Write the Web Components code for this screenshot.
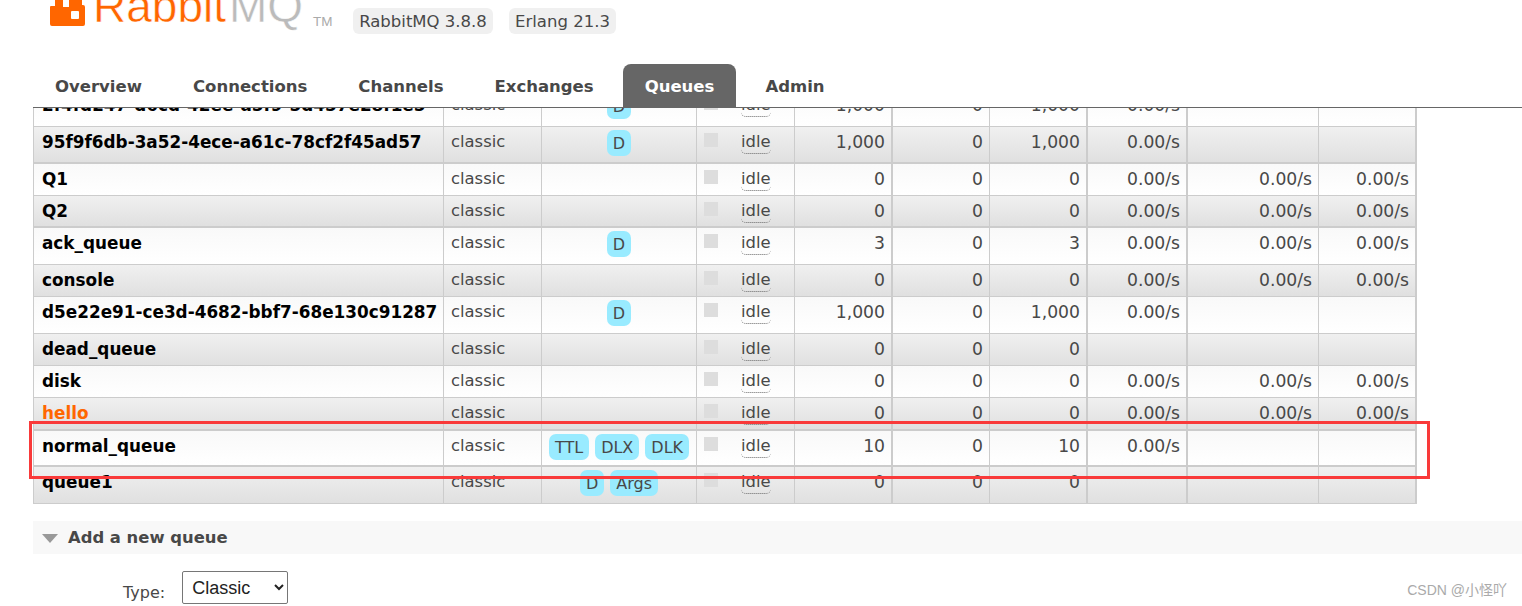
<!DOCTYPE html>
<html lang="en">
<head>
<meta charset="utf-8">
<title>RabbitMQ Management</title>
<style>
  html, body { margin: 0; height: 606px; overflow: hidden; background: #fff; }
  body { font-family: "DejaVu Sans", Verdana, sans-serif; color: #484848; }
</style>
</head>
<body>
<rmq-page>
  <rmq-header slot="header">
    <version-pill style="width:140px">RabbitMQ 3.8.8</version-pill>
    <version-pill style="width:107px">Erlang 21.3</version-pill>
  </rmq-header>
  <rmq-nav slot="nav">
    <nav-tab>Overview</nav-tab>
    <nav-tab>Connections</nav-tab>
    <nav-tab>Channels</nav-tab>
    <nav-tab>Exchanges</nav-tab>
    <nav-tab active>Queues</nav-tab>
    <nav-tab>Admin</nav-tab>
  </rmq-nav>
  <queue-table>
    <queue-row h="37" name="2f4fd247-d6cd-42ee-a5f9-5d457e28f1e5" badges="D" vals="1,000|0|1,000|0.00/s||"></queue-row>
    <queue-row alt thick h="37" name="95f9f6db-3a52-4ece-a61c-78cf2f45ad57" badges="D" vals="1,000|0|1,000|0.00/s||"></queue-row>
    <queue-row h="32" name="Q1" vals="0|0|0|0.00/s|0.00/s|0.00/s"></queue-row>
    <queue-row alt thick h="32" name="Q2" vals="0|0|0|0.00/s|0.00/s|0.00/s"></queue-row>
    <queue-row h="37" name="ack_queue" badges="D" vals="3|0|3|0.00/s|0.00/s|0.00/s"></queue-row>
    <queue-row alt h="32" name="console" vals="0|0|0|0.00/s|0.00/s|0.00/s"></queue-row>
    <queue-row h="37" name="d5e22e91-ce3d-4682-bbf7-68e130c91287" badges="D" vals="1,000|0|1,000|0.00/s||"></queue-row>
    <queue-row alt h="32" name="dead_queue" vals="0|0|0|||"></queue-row>
    <queue-row h="32" name="disk" vals="0|0|0|0.00/s|0.00/s|0.00/s"></queue-row>
    <queue-row alt thick h="33" name="hello" highlight vals="0|0|0|0.00/s|0.00/s|0.00/s"></queue-row>
    <queue-row thick h="36" name="normal_queue" badges="TTL,DLX,DLK" vals="10|0|10|0.00/s||"></queue-row>
    <queue-row alt h="37" name="queue1" badges="D,Args" vals="0|0|0|||"></queue-row>
  </queue-table>
  <add-queue></add-queue>
  <red-box slot="overlay"></red-box>
  <csdn-mark slot="overlay">CSDN @小怪吖</csdn-mark>
</rmq-page>

<script>
class RmqPage extends HTMLElement {
    constructor() {
        super();
        this.attachShadow({ mode: 'open' });
        this.shadowRoot.innerHTML = `
            <style>
                :host { display: block; position: relative; width: 1522px; height: 606px; overflow: hidden; }
                main { height: 498px; overflow: hidden; }
            </style>
            <slot name="header"></slot>
            <slot name="nav"></slot>
            <main><slot></slot></main>
            <slot name="overlay"></slot>
        `;
    }
}
customElements.define('rmq-page', RmqPage);

class RmqHeader extends HTMLElement {
    constructor() {
        super();
        this.attachShadow({ mode: 'open' });
        this.shadowRoot.innerHTML = `
            <style>
                :host { display: flex; height: 64px; overflow: hidden; align-items: flex-start; padding-left: 50px; }
                svg { flex: none; }
                .word {
                    flex: none; width: 211px; height: 40px; margin-left: 8px; margin-top: -17px;
                    font: 46px/46px "Liberation Sans", sans-serif; color: #f60; white-space: nowrap;
                    -webkit-text-stroke: .5px #fff;
                }
                .word span { color: #bbb; margin-left: 3px; }
                .tm { flex: none; margin: 16px 0 0 9px; width: 22px; font: 13.5px/11px "Liberation Sans", sans-serif; color: #aaa; }
                .pills { display: flex; gap: 16px; margin: 8px 0 0 18px; }
            </style>
            <svg width="35" height="26" viewBox="0 0 35 26">
                <path fill="#f60" d="M1 6H5V0H13V7H19V0H32V5H33a2 2 0 0 1 2 2V24a2 2 0 0 1-2 2H2a2 2 0 0 1-2-2V7a1 1 0 0 1 1-1z"/>
                <rect fill="#fff" x="21" y="11" width="8" height="8" rx="1"/>
            </svg>
            <div class="word">Rabbit<span>MQ</span></div>
            <div class="tm">TM</div>
            <div class="pills"><slot></slot></div>
        `;
    }
}
customElements.define('rmq-header', RmqHeader);

class VersionPill extends HTMLElement {
    constructor() {
        super();
        this.attachShadow({ mode: 'open' });
        this.shadowRoot.innerHTML = `
            <style>
                :host {
                    display: block; height: 26px; border-radius: 6px; background: #f0f0f0; text-align: center;
                    font: 16.5px/28px "DejaVu Sans", Verdana, sans-serif; color: #484848; white-space: nowrap;
                }
            </style>
            <slot></slot>
        `;
    }
}
customElements.define('version-pill', VersionPill);

class RmqNav extends HTMLElement {
    constructor() {
        super();
        this.attachShadow({ mode: 'open' });
        this.shadowRoot.innerHTML = `
            <style>
                :host {
                    display: flex; gap: 7px; height: 43px; margin-left: 33px;
                    border-bottom: 1px solid #666; position: relative; z-index: 1; background: #fff;
                }
            </style>
            <slot></slot>
        `;
    }
}
customElements.define('rmq-nav', RmqNav);

class NavTab extends HTMLElement {
    constructor() {
        super();
        this.attachShadow({ mode: 'open' });
        this.shadowRoot.innerHTML = `
            <style>
                :host {
                    display: block; padding: 0 22px; border-radius: 8px 8px 0 0;
                    font: bold 16.5px/45px "DejaVu Sans", Verdana, sans-serif; color: #484848;
                }
                :host([active]) { background: #666; color: #fff; }
            </style>
            <slot></slot>
        `;
    }
}
customElements.define('nav-tab', NavTab);

class QueueTable extends HTMLElement {
    constructor() {
        super();
        this.attachShadow({ mode: 'open' });
        this.shadowRoot.innerHTML = `
            <style>
                :host { display: block; width: 1384px; margin: -18px 0 0 33px; }
            </style>
            <slot></slot>
        `;
    }
}
customElements.define('queue-table', QueueTable);

class QueueRow extends HTMLElement {
    constructor() {
        super();
        this.attachShadow({ mode: 'open' });
    }

    connectedCallback() {
        const name = this.getAttribute('name');
        const badges = (this.getAttribute('badges') || '').split(',').filter(Boolean);
        const vals = this.getAttribute('vals').split('|');
        const thickCols = [false, false, false, true, false, true, true, false, true];
        const valueCells = vals.map((v, i) =>
            `<div class="cell num ${thickCols[i + 3] ? 'thick' : ''}">${v}</div>`).join('');
        this.shadowRoot.innerHTML = `
            <style>
                :host {
                    display: grid; box-sizing: border-box; height: ${this.getAttribute('h')}px;
                    grid-template-columns: 410px 98px 155px 98px 98px 97px 98px 100px 131px 98px;
                    border-left: 1px solid #ccc; border-bottom: 1px solid #ccc;
                    background: linear-gradient(#f9f9f9, #fff);
                    font: 16.4px/20px "DejaVu Sans", Verdana, sans-serif; color: #484848;
                }
                :host([alt]) { background: linear-gradient(#f0f0f0, #e0e0e0); }
                :host([thick]) { border-bottom-width: 2px; }
                .cell { box-sizing: border-box; padding: 5px 7px 0; border-right: 1px solid #ccc; white-space: nowrap; overflow: hidden; }
                .thick { border-right-width: 2px; }
                .name { padding-left: 8px; font-weight: bold; font-size: 16.85px; color: #000; }
                :host([highlight]) .name { color: #f60; }
                .features { display: flex; justify-content: center; gap: 6px; padding: 3px 0 0; }
                .state { display: flex; padding-left: 7px; }
                .check { width: 14px; height: 14px; margin-top: 1px; background: #ddd; }
                .idle { margin-left: 23px; height: 20px; padding-bottom: 1px; border-bottom: 1px dotted #666; border-radius: 0 0 5px 5px; }
                .num { text-align: right; padding-right: 6px; font-size: 17.2px; }
            </style>
            <div class="cell name">${name}</div>
            <div class="cell">classic</div>
            <div class="cell features">${badges.map(b => `<feature-badge>${b}</feature-badge>`).join('')}</div>
            <div class="cell state"><span class="check"></span><span class="idle">idle</span></div>
            ${valueCells}
        `;
    }
}
customElements.define('queue-row', QueueRow);

class FeatureBadge extends HTMLElement {
    constructor() {
        super();
        this.attachShadow({ mode: 'open' });
        this.shadowRoot.innerHTML = `
            <style>
                :host {
                    display: block; height: 26px; padding: 0 6px; border-radius: 7px; background: #99ebff;
                    font: 16px/28px "DejaVu Sans", Verdana, sans-serif; color: #484848;
                }
            </style>
            <slot></slot>
        `;
    }
}
customElements.define('feature-badge', FeatureBadge);

class AddQueue extends HTMLElement {
    constructor() {
        super();
        this.attachShadow({ mode: 'open' });
        this.shadowRoot.innerHTML = `
            <style>
                :host { display: block; margin: 17px 0 0 33px; font: 16px/20px "DejaVu Sans", Verdana, sans-serif; color: #484848; }
                .bar { display: flex; align-items: center; gap: 10px; box-sizing: border-box; height: 33px; padding: 1px 0 0 9px; background: #f8f8f8; font-weight: bold; font-size: 16.4px; }
                .tri { width: 0; height: 0; border: 8px solid transparent; border-top: 9px solid #999; border-bottom: 0; }
                .type { display: flex; align-items: flex-end; gap: 17px; margin: 17px 0 0 90px; }
                label { line-height: 22px; }
                select {
                    box-sizing: border-box; width: 106px; height: 33px; padding-left: 5px; background: #fff; color: #222;
                    font: 18px "Liberation Sans", Arial, sans-serif; border: 1px solid #767676; border-radius: 2px;
                }
            </style>
            <div class="bar"><span class="tri"></span>Add a new queue</div>
            <div class="type">
                <label>Type:</label>
                <select><option>Classic</option></select>
            </div>
        `;
    }
}
customElements.define('add-queue', AddQueue);

// the red annotation drawn over the screenshot
class RedBox extends HTMLElement {
    constructor() {
        super();
        this.attachShadow({ mode: 'open' });
        this.shadowRoot.innerHTML = `
            <style>
                :host {
                    position: absolute; left: 29px; top: 421px; width: 1401px; height: 58px;
                    box-sizing: border-box; border: 3px solid #f93a3a; z-index: 2;
                }
            </style>
        `;
    }
}
customElements.define('red-box', RedBox);

class CsdnMark extends HTMLElement {
    constructor() {
        super();
        this.attachShadow({ mode: 'open' });
        this.shadowRoot.innerHTML = `
            <style>
                :host {
                    position: absolute; right: 15px; top: 580px; z-index: 2;
                    font: 14px/20px "Liberation Sans", "Noto Sans CJK SC", sans-serif; color: #aaa; white-space: nowrap;
                }
            </style>
            <slot></slot>
        `;
    }
}
customElements.define('csdn-mark', CsdnMark);
</script>
</body>
</html>
